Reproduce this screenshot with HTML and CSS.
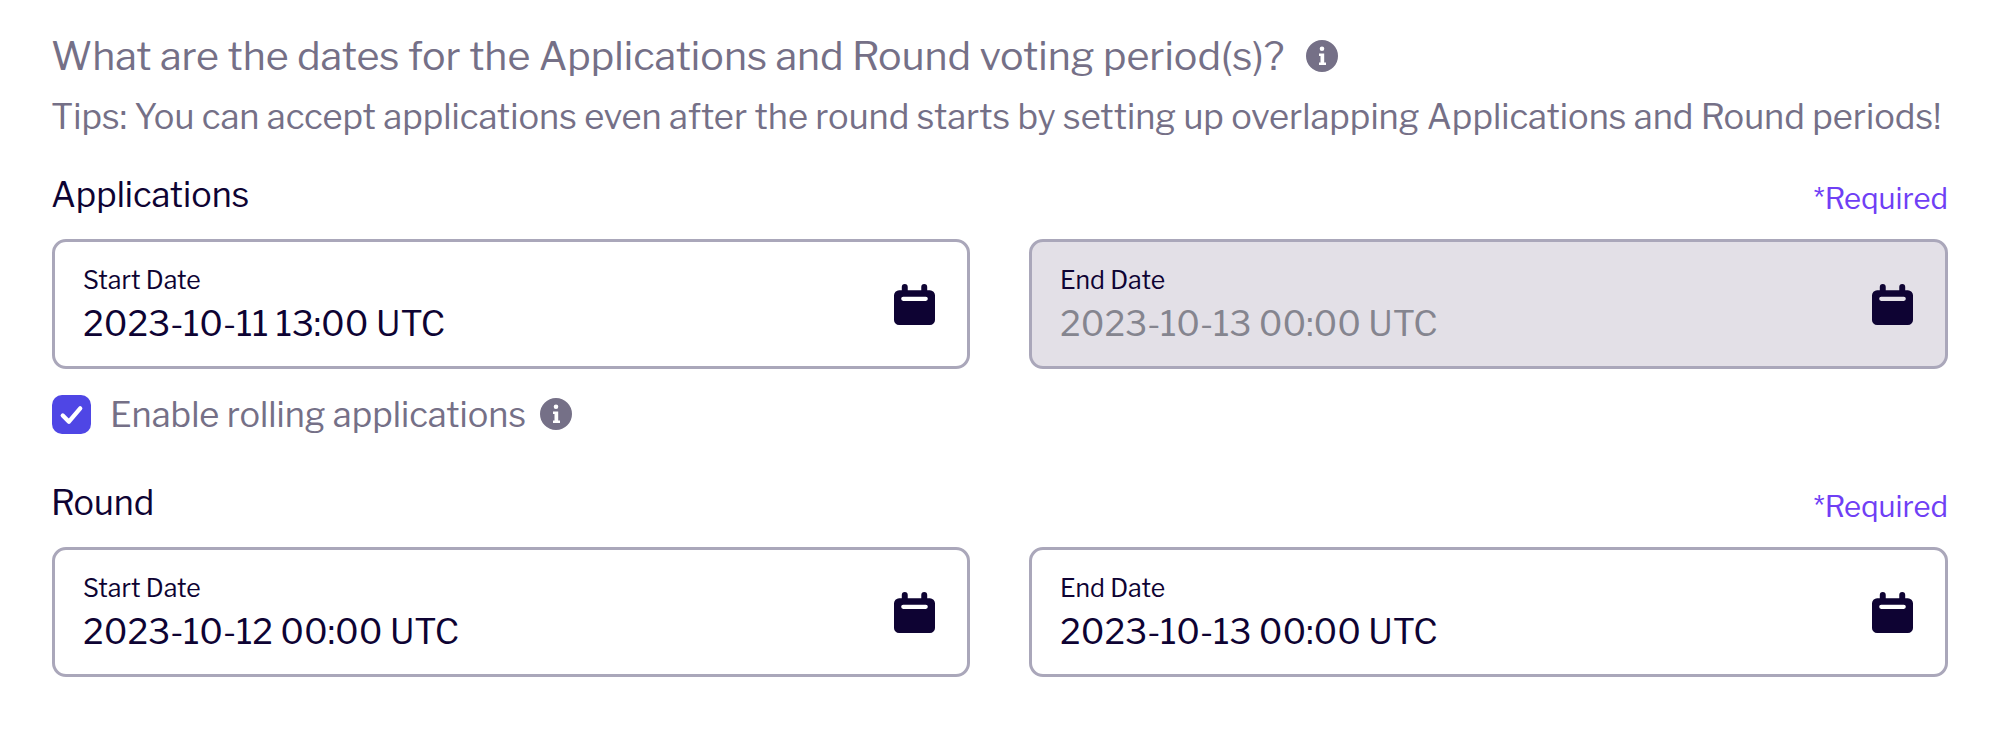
FILE: index.html
```html
<!DOCTYPE html>
<html lang="en">
<head>
<meta charset="utf-8">
<title>Dates</title>
<link rel="stylesheet" href="styles.css">
</head>
<body>
<svg class="defs" width="0" height="0">
  <symbol id="cal" viewBox="0 0 40 40">
    <path fill-rule="evenodd" d="M10.500 0a2.900 2.900 0 0 1 2.900 2.900V6h13.200V2.900a2.900 2.900 0 0 1 5.800 0V6H35a5 5 0 0 1 5 5v24a5 5 0 0 1-5 5H5a5 5 0 0 1-5-5V11a5 5 0 0 1 5-5h2.600V2.900A2.900 2.900 0 0 1 10.500 0zM9 12.500a2 2 0 0 0 0 4h22a2 2 0 0 0 0-4H9z"/>
  </symbol>
  <symbol id="info" viewBox="0 0 32 32">
    <path fill-rule="evenodd" d="M16 0a16 16 0 1 1 0 32a16 16 0 0 1 0-32zM16 6.500a2.300 2.300 0 1 0 0 4.600a2.300 2.300 0 0 0 0-4.600zM13 13.500v2.500h1.500v6.500H13V25h7v-2.500h-1.800v-9z"/>
  </symbol>
</svg>
<main class="page">
  <h2 class="title">What are the dates for the Applications and Round voting period(s)?<svg class="info info-title"><use href="#info"/></svg></h2>
  <p class="tips">Tips: You can accept applications even after the round starts by setting up overlapping Applications and Round periods!</p>

  <div class="head"><span class="head-name">Applications</span><span class="req">*Required</span></div>
  <div class="pair">
    <div class="card"><div class="card-text"><div class="lbl">Start Date</div><div class="val">2023-10-11 13:00 UTC</div></div><svg class="cal"><use href="#cal"/></svg></div>
    <div class="card card-off"><div class="card-text"><div class="lbl">End Date</div><div class="val">2023-10-13 00:00 UTC</div></div><svg class="cal"><use href="#cal"/></svg></div>
  </div>
  <div class="rolling">
    <span class="check"><svg viewBox="0 0 38 38"><path d="M10.500 20l6 6 11-13" fill="none" stroke="#fff" stroke-width="4.200" stroke-linecap="round" stroke-linejoin="round"/></svg></span>
    <span class="rolling-text">Enable rolling applications</span>
    <svg class="info info-roll"><use href="#info"/></svg>
  </div>

  <div class="head head-round"><span class="head-name">Round</span><span class="req">*Required</span></div>
  <div class="pair">
    <div class="card"><div class="card-text"><div class="lbl">Start Date</div><div class="val">2023-10-12 00:00 UTC</div></div><svg class="cal"><use href="#cal"/></svg></div>
    <div class="card"><div class="card-text"><div class="lbl">End Date</div><div class="val">2023-10-13 00:00 UTC</div></div><svg class="cal"><use href="#cal"/></svg></div>
  </div>
</main>
</body>
</html>
```
FILE: styles.css
```css
* { box-sizing: border-box; }
html, body { margin: 0; background: #fff; }
body { font-family: "Libre Franklin", "Open Sans", "Liberation Sans", sans-serif; color: #0e0333; }
.defs { position: absolute; }
.page { width: 2000px; height: 744px; padding: 32px 52px 0; }
.title { margin: 0 0 0 -1px; height: 48px; font-size: 39.400px; line-height: 48px; font-weight: 400; color: #757087; display: flex; align-items: center; white-space: nowrap; }
.tips { margin: 13px 0 0 -1px; height: 48px; font-size: 34.450px; line-height: 48px; color: #757087; white-space: nowrap; }
.info { fill: #757087; width: 32px; height: 32px; flex: none; }
.info-title { margin-left: 22px; }
.head { display: flex; justify-content: space-between; align-items: flex-end; height: 40px; margin-top: 34px; }
.head-name { font-size: 34.200px; line-height: 40px; margin-left: -1px; }
.req { font-size: 29.300px; line-height: 32px; color: #6f3ff5; }
.pair { display: grid; grid-template-columns: 918fr 919fr; gap: 59px; margin-top: 24px; }
.card { height: 130px; border: 3px solid #aaa7ba; border-radius: 14px; background: #fff; padding: 0 32px 0 28px; display: flex; align-items: center; justify-content: space-between; }
.card-off { background: #e3e0e7; }
.card-off .val { color: #85858f; }
.lbl { font-size: 24.800px; line-height: 32px; margin-top: 3px; }
.val { font-size: 34.500px; line-height: 46px; margin-top: 5px; color: #0e0333; }
.cal { width: 41px; height: 41px; fill: #0e0333; flex: none; }
.rolling { display: flex; align-items: center; height: 40px; margin-top: 25px; }
.check { width: 39px; height: 39px; background: #4f46e5; border-radius: 10px; flex: none; }
.check svg { display: block; width: 39px; height: 39px; }
.rolling-text { font-size: 34.400px; line-height: 40px; color: #757087; margin: 2px 0 0 19px; }
.info-roll { margin-left: 14px; }
.head-round { margin-top: 49px; }
```
